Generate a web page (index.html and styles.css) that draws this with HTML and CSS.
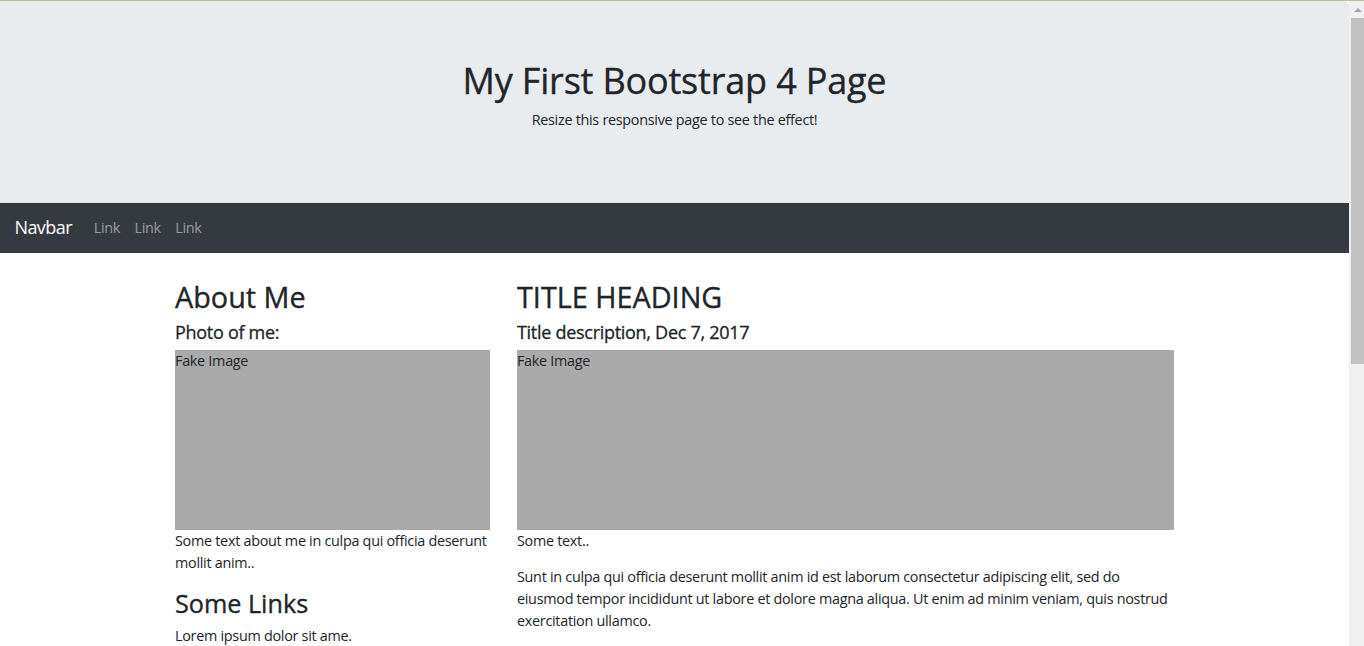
FILE: index.html
```
<!DOCTYPE html>
<html lang="en">
<head>
<meta charset="utf-8">
<title>Bootstrap 4 Page</title>
<link rel="stylesheet" href="styles.css">
</head>
<body>
<div class="window">
  <div class="page">
    <div class="jumbotron">
      <h1>My First Bootstrap 4 Page</h1>
      <p>Resize this responsive page to see the effect!</p>
    </div>

    <nav class="navbar">
      <a class="brand" href="#">Navbar</a>
      <ul class="navbar-nav">
        <li><a class="nav-link" href="#">Link</a></li>
        <li><a class="nav-link" href="#">Link</a></li>
        <li><a class="nav-link" href="#">Link</a></li>
      </ul>
    </nav>

    <div class="container">
      <div class="row">
        <div class="col-4">
          <h2>About Me</h2>
          <h5>Photo of me:</h5>
          <div class="fakeimg">Fake Image</div>
          <p>Some text about me in culpa qui officia deserunt mollit anim..</p>
          <h3>Some Links</h3>
          <p class="last">Lorem ipsum dolor sit ame.</p>
        </div>
        <div class="col-8">
          <h2>TITLE HEADING</h2>
          <h5>Title description, Dec 7, 2017</h5>
          <div class="fakeimg">Fake Image</div>
          <p>Some text..</p>
          <p class="last">Sunt in culpa qui officia deserunt mollit anim id est laborum consectetur adipiscing elit, sed do eiusmod tempor incididunt ut labore et dolore magna aliqua. Ut enim ad minim veniam, quis nostrud exercitation ullamco.</p>
        </div>
      </div>
    </div>
  </div>
  <div class="scrollbar">
    <div class="sb-up"><span class="sb-arrow"></span></div>
    <div class="sb-thumb"></div>
  </div>
</div>
</body>
</html>
```

FILE: styles.css
```
html {
  font-size: 14.4px;
}
body {
  margin: 0;
  border-top: 1px solid #c4ba98;
  font-family: "Open Sans", "Noto Sans", sans-serif;
  font-size: 1rem;
  line-height: 1.5;
  color: #212529;
  background: #fff;
  overflow: hidden;
}
.window {
  display: flex;
  height: 645px;
}
.page {
  flex: 1;
  min-width: 0;
  overflow: hidden;
}
.scrollbar {
  width: 15px;
  flex: 0 0 15px;
  background: #f0f0f0;
  display: flex;
  flex-direction: column;
  align-items: flex-end;
}
.sb-up {
  width: 15px;
  height: 17px;
  display: flex;
  align-items: center;
  justify-content: center;
}
.sb-arrow {
  width: 0;
  height: 0;
  border-left: 4px solid transparent;
  border-right: 4px solid transparent;
  border-bottom: 4px solid #a3a3a3;
  margin-left: 2px;
}
.sb-thumb {
  width: 13px;
  height: 346px;
  background: #c1c1c1;
}
h1, h2, h3, h5 {
  font-weight: 500;
  line-height: 1.2;
  margin: 0 0 .5rem;
  -webkit-text-stroke: 0.35px currentColor;
}
h1 { font-size: 2.5rem; letter-spacing: -0.005em; }
h2 { font-size: 2rem; }
h3 { font-size: 1.75rem; }
h5 { font-size: 1.25rem; letter-spacing: -0.016em; -webkit-text-stroke: 0.3px currentColor; }
p {
  margin: 0 0 1rem;
}
p, .fakeimg, .nav-link {
  letter-spacing: -0.02em;
}
p.last {
  margin-bottom: 0;
}
a {
  text-decoration: none;
}
.jumbotron {
  background: #e9ecef;
  padding: 4rem 2rem;
  border-radius: 0 .3rem .3rem 0;
  text-align: center;
}
.navbar {
  display: flex;
  align-items: center;
  background: #343a40;
  padding: .5rem 1rem;
}
.brand {
  font-size: 1.25rem;
  line-height: 1.5;
  padding: .3125rem 0;
  margin-right: 1rem;
  color: #fff;
  letter-spacing: -0.03em;
}
.navbar-nav {
  display: flex;
  list-style: none;
  margin: 0;
  padding: 0;
}
.nav-link {
  display: block;
  padding: .5rem;
  color: rgba(255, 255, 255, .5);
}
.container {
  box-sizing: border-box;
  max-width: 1026px;
  margin: 27px auto 0;
  padding: 0 13.5px;
}
.row {
  display: flex;
  margin: 0 -13.5px;
}
.col-4, .col-8 {
  padding: 0 13.5px;
  box-sizing: border-box;
}
.col-4 {
  flex: 0 0 33.3333%;
  max-width: 33.3333%;
}
.col-8 {
  flex: 0 0 66.6667%;
  max-width: 66.6667%;
}
.fakeimg {
  height: 180px;
  background: #aaa;
}
```
